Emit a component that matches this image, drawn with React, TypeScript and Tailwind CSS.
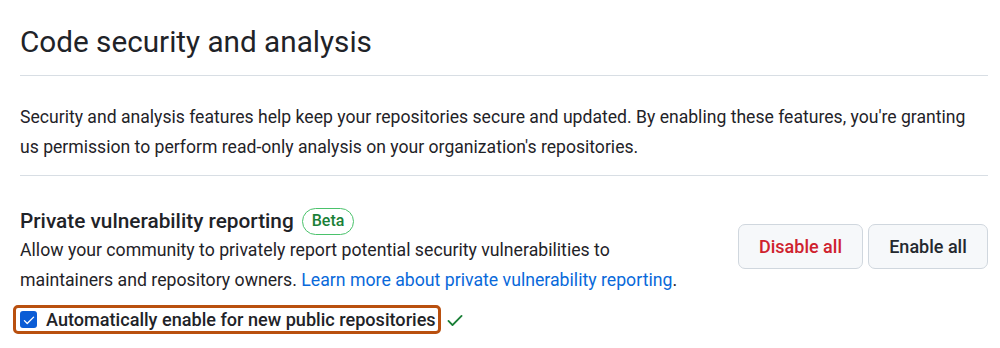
const CheckIcon = () => (
  <svg viewBox="0 0 16 16" width="20" height="20" className="fill-[#1a7f37]">
    <path d="M13.78 4.22a.75.75 0 0 1 0 1.06l-7.25 7.25a.75.75 0 0 1-1.06 0L2.22 9.28a.751.751 0 0 1 .018-1.042.751.751 0 0 1 1.042-.018L6 10.94l6.72-6.72a.75.75 0 0 1 1.06 0Z" />
  </svg>
);

const BoxCheck = () => (
  <span className="w-[17px] h-[17px] rounded-[3px] bg-[#0b5cd5] flex items-center justify-center shrink-0">
    <svg viewBox="0 0 16 16" width="14" height="14" className="fill-white">
      <path d="M13.78 4.22a.75.75 0 0 1 0 1.06l-7.25 7.25a.75.75 0 0 1-1.06 0L2.22 9.28a.751.751 0 0 1 .018-1.042.751.751 0 0 1 1.042-.018L6 10.94l6.72-6.72a.75.75 0 0 1 1.06 0Z" />
    </svg>
  </span>
);

export default function App() {
  return (
    <div className="w-[1000px] h-[348px] bg-white pl-[20px] pr-[12px] text-[#1f2328] font-['Roboto',sans-serif] overflow-hidden">
      <h2 className="pt-[24px] pb-[15px] text-[29.7px] leading-[36px] font-normal border-b border-[#d8dee4]">
        Code security and analysis
      </h2>

      <p className="pt-[26px] pb-[13px] text-[17.6px] leading-[30px] border-b border-[#d8dee4]">
        Security and analysis features help keep your repositories secure and updated. By enabling these features, you're granting us permission to perform read-only analysis on your organization's repositories.
      </p>

      <div className="flex items-start justify-between pt-[31px]">
        <div>
          <div className="flex items-center gap-[8px]">
            <h3 className="text-[20.8px] leading-[28px] font-medium">Private vulnerability reporting</h3>
            <span className="border border-[#4ac26b] text-[#1a7f37] rounded-full px-[9px] h-[27px] flex items-center text-[16px] font-medium">
              Beta
            </span>
          </div>
          <p className="text-[17.7px] leading-[30px] w-[675px]">
            Allow your community to privately report potential security vulnerabilities to maintainers and repository owners.{" "}
            <a className="text-[#0969da]">Learn more about private vulnerability reporting</a>.
          </p>
        </div>
        <div className="flex gap-[5px] mt-[17px]">
          <button className="h-[45px] w-[125px] rounded-[7px] border border-[#d0d7de] bg-[#f6f8fa] text-[#cf222e] text-[18px] font-medium">
            Disable all
          </button>
          <button className="h-[45px] w-[120px] rounded-[7px] border border-[#d0d7de] bg-[#f6f8fa] text-[#24292f] text-[18px] font-medium">
            Enable all
          </button>
        </div>
      </div>

      <div className="flex items-center gap-[4px] mt-[10px] -ml-[7px]">
        <div className="flex items-center gap-[9px] border-[3px] border-[#b9500f] rounded-[5px] h-[29px] pl-[4px] pr-[2px]">
          <BoxCheck />
          <span className="text-[18.1px] leading-[22px] font-medium whitespace-nowrap">Automatically enable for new public repositories</span>
        </div>
        <CheckIcon />
      </div>
    </div>
  );
}
